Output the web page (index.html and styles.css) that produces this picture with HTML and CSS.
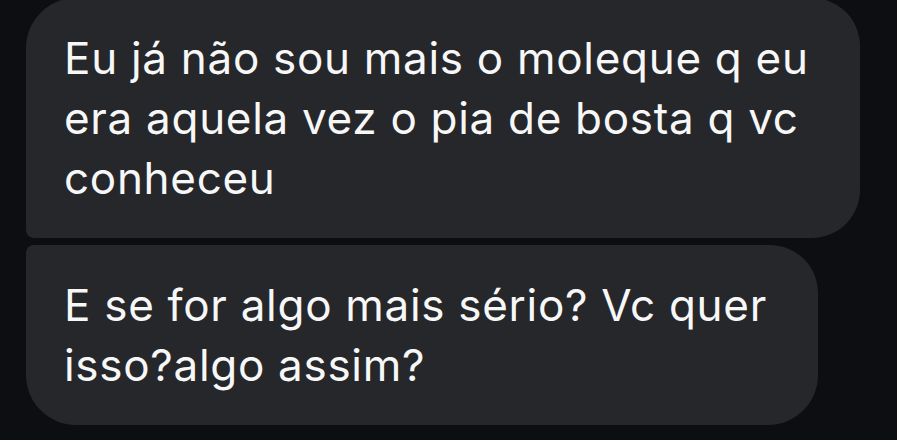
FILE: index.html
```html
<!DOCTYPE html>
<html lang="pt-BR">
<head>
<meta charset="utf-8">
<link rel="stylesheet" href="styles.css">
</head>
<body>
<div class="thread">
  <div class="bubble bubble-first">Eu já não sou mais o moleque q eu era aquela vez o pia de bosta q vc conheceu</div>
  <div class="bubble bubble-last">E se for algo mais sério? Vc quer isso?algo assim?</div>
</div>
</body>
</html>
```

FILE: styles.css
```css
html, body {
  margin: 0;
  padding: 0;
  background: #0c0e12;
  height: 100%;
  overflow: hidden;
}

.thread {
  display: flex;
  flex-direction: column;
  align-items: flex-start;
  gap: 7px;
  padding-left: 26px;
  margin-top: -2px;
}

.bubble {
  box-sizing: border-box;
  background: #25272b;
  color: #f7f7f7;
  font-family: Inter, "Noto Sans", sans-serif;
  font-size: 44px;
  letter-spacing: 0.7px;
  line-height: 60px;
  padding: 30px 30px 30px 38px;
  border-radius: 48px;
}

.bubble-first {
  width: 834px;
  border-bottom-left-radius: 8px;
  border-top-left-radius: 50px;
}

.bubble-last {
  width: 792px;
  border-top-left-radius: 8px;
  border-bottom-left-radius: 50px;
  border-bottom-right-radius: 50px;
}
```
